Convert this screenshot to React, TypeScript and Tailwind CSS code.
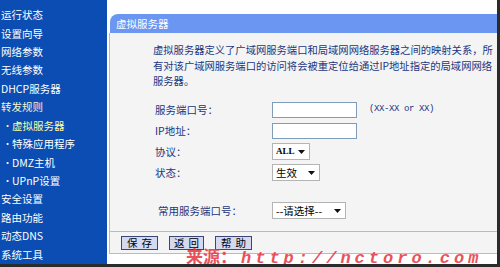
const NAV: { t: string; sub?: boolean; c?: string }[] = [
  { t: "运行状态" },
  { t: "设置向导" },
  { t: "网络参数" },
  { t: "无线参数" },
  { t: "DHCP服务器" },
  { t: "转发规则", c: "text-[#f6f6d2]" },
  { t: "虚拟服务器", sub: true, c: "text-[#ffffa8]" },
  { t: "特殊应用程序", sub: true },
  { t: "DMZ主机", sub: true },
  { t: "UPnP设置", sub: true },
  { t: "安全设置" },
  { t: "路由功能" },
  { t: "动态DNS" },
  { t: "系统工具" },
];

function Arrow() {
  return (
    <svg width="7" height="4" viewBox="0 0 7 4" className="shrink-0">
      <path d="M0 0H7L3.5 4Z" fill="#111" />
    </svg>
  );
}

function Select({ width, children }: { width: string; children: React.ReactNode }) {
  return (
    <div className={`flex h-[17px] items-center justify-between border border-[#b4b4b4] bg-white pl-[3px] pr-[4px] text-[10.5px] leading-[15px] text-black ${width}`}>
      {children}
      <Arrow />
    </div>
  );
}

function Btn({ label, width }: { label: string; width: string }) {
  return (
    <div className={`flex h-[14px] items-center justify-center border border-[#3b4677] bg-[#d4d9f0] text-[10.5px] leading-[12px] tracking-[4px] text-black ${width}`}>
      <span className="ml-[4px]">{label}</span>
    </div>
  );
}

export default function App() {
  return (
    <div className="relative flex h-[267px] w-[500px] overflow-hidden border-b-[3px] border-r-[3px] border-[#2b2b2b] bg-white font-['Noto_Sans_CJK_SC',sans-serif]">
      <div className="flex w-[107px] shrink-0 flex-col bg-[#0b4db3] pt-[6px]">
        {NAV.map((n) => (
          <div key={n.t} className={`flex h-[18.75px] items-center whitespace-nowrap text-[10.5px] leading-[18px] ${n.c ?? "text-white"} ${n.sub ? "pl-[3px]" : "pl-[1px]"}`}>
            {n.sub && <span className="w-[9px] text-[9px]">•</span>}
            {n.t}
          </div>
        ))}
      </div>

      <div className="flex flex-1 flex-col pt-[14px]">
        <div className="ml-[3px] h-[19px] rounded-tl-[8px] bg-[#6b97f2] pl-[6px] text-[10.5px] leading-[19px] text-white">虚拟服务器</div>

        <div className="ml-[2px] h-[198px] border-l border-[#e2b283] bg-[#f4f4f4]">
          <p className="whitespace-nowrap pl-[43px] pt-[9px] text-[10.3px] leading-[15.5px] text-[#22367f]">
            虚拟服务器定义了广域网服务端口和局域网网络服务器之间的映射关系，所
            <br />
            有对该广域网服务端口的访问将会被重定位给通过IP地址指定的局域网网络
            <br />
            服务器。
          </p>

          <div className="mt-[10.5px] flex flex-col text-[10.5px] text-[#22367f]">
            <div className="flex h-[21px] items-center pl-[45px]">
              <span className="w-[117px]">服务端口号：</span>
              <div className="h-[16px] w-[85px] border border-[#7f9db9] bg-white" />
              <span className="ml-[12px] font-['Liberation_Mono',monospace] text-[9px] tracking-[-0.4px]">(XX-XX or XX)</span>
            </div>
            <div className="flex h-[21px] items-center pl-[45px]">
              <span className="w-[117px]">IP地址：</span>
              <div className="h-[16px] w-[85px] border border-[#7f9db9] bg-white" />
            </div>
            <div className="flex h-[21px] items-center pl-[45px]">
              <span className="w-[117px]">协议：</span>
              <Select width="w-[38px]">
                <span className="font-['Liberation_Serif',serif] text-[9px] font-bold">ALL</span>
              </Select>
            </div>
            <div className="flex h-[21px] items-center pl-[45px]">
              <span className="w-[117px]">状态：</span>
              <Select width="w-[48px]">
                <span>生效</span>
              </Select>
            </div>
            <div className="mt-[17px] flex h-[21px] items-center pl-[48px]">
              <span className="w-[114px]">常用服务端口号：</span>
              <Select width="w-[74px]">
                <span>--请选择--</span>
              </Select>
            </div>
          </div>
        </div>

        <div className="ml-[2px] flex h-[23px] items-center gap-[11px] border-y border-l border-[#e2b283] bg-[#f4f4f4] pl-[11px]">
          <Btn label="保存" width="w-[37px]" />
          <Btn label="返回" width="w-[35px]" />
          <Btn label="帮助" width="w-[37px]" />
        </div>
      </div>

      <div className="absolute left-[186px] top-[248px] flex items-baseline whitespace-nowrap text-[#e6353f] opacity-85">
        <span className="text-[17px] font-bold leading-[16px]">来源：</span>
        <span className="ml-[4px] font-['Liberation_Mono',monospace] text-[17px] font-bold italic leading-[16px] tracking-[4px]">http://nctoro.com</span>
      </div>
    </div>
  );
}
